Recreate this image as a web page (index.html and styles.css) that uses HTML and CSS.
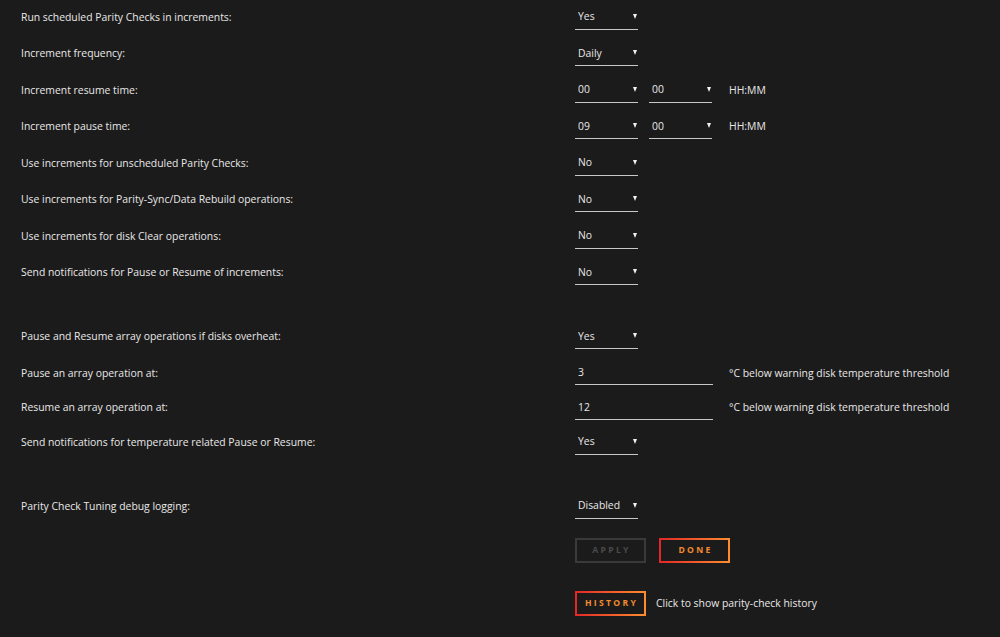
FILE: index.html
```html
<!DOCTYPE html>
<html lang="en">
<head>
    <meta charset="UTF-8">
    <title>Parity Check Tuning</title>
    <link rel="stylesheet" href="styles.css">
</head>
<body>
    <form class="settings">
        <div class="row">
            <span class="label">Run scheduled Parity Checks in increments:</span>
            <div class="control"><span class="select"><select><option>Yes</option></select></span></div>
        </div>
        <div class="row">
            <span class="label">Increment frequency:</span>
            <div class="control"><span class="select"><select><option>Daily</option></select></span></div>
        </div>
        <div class="row">
            <span class="label">Increment resume time:</span>
            <div class="control">
                <span class="select"><select><option>00</option></select></span>
                <span class="select"><select><option>00</option></select></span>
                <span class="hint">HH:MM</span>
            </div>
        </div>
        <div class="row">
            <span class="label">Increment pause time:</span>
            <div class="control">
                <span class="select"><select><option>09</option></select></span>
                <span class="select"><select><option>00</option></select></span>
                <span class="hint">HH:MM</span>
            </div>
        </div>
        <div class="row">
            <span class="label">Use increments for unscheduled Parity Checks:</span>
            <div class="control"><span class="select"><select><option>No</option></select></span></div>
        </div>
        <div class="row">
            <span class="label">Use increments for Parity-Sync/Data Rebuild operations:</span>
            <div class="control"><span class="select"><select><option>No</option></select></span></div>
        </div>
        <div class="row">
            <span class="label">Use increments for disk Clear operations:</span>
            <div class="control"><span class="select"><select><option>No</option></select></span></div>
        </div>
        <div class="row">
            <span class="label">Send notifications for Pause or Resume of increments:</span>
            <div class="control"><span class="select"><select><option>No</option></select></span></div>
        </div>

        <div class="spacer"></div>

        <div class="row">
            <span class="label">Pause and Resume array operations if disks overheat:</span>
            <div class="control"><span class="select"><select><option>Yes</option></select></span></div>
        </div>
        <div class="row row-input">
            <span class="label">Pause an array operation at:</span>
            <div class="control">
                <input type="text" class="text" value="3">
                <span class="hint">°C below warning disk temperature threshold</span>
            </div>
        </div>
        <div class="row row-input">
            <span class="label">Resume an array operation at:</span>
            <div class="control">
                <input type="text" class="text" value="12">
                <span class="hint">°C below warning disk temperature threshold</span>
            </div>
        </div>
        <div class="row">
            <span class="label">Send notifications for temperature related Pause or Resume:</span>
            <div class="control"><span class="select"><select><option>Yes</option></select></span></div>
        </div>

        <div class="spacer"></div>

        <div class="row">
            <span class="label">Parity Check Tuning debug logging:</span>
            <div class="control"><span class="select"><select><option>Disabled</option></select></span></div>
        </div>

        <div class="buttons">
            <button type="button" class="btn" disabled>Apply</button>
            <button type="button" class="btn">Done</button>
        </div>

        <div class="buttons history">
            <button type="button" class="btn">History</button>
            <span class="hint">Click to show parity-check history</span>
        </div>
    </form>
</body>
</html>
```

FILE: styles.css
```css
/* Parity check tuning settings - dark theme */
body {
    margin: 0;
    background: #1c1b1b;
    color: #e8e8e8;
    font-family: 'Open Sans', 'DejaVu Sans', sans-serif;
    font-size: 10.4px;
}

.settings {
    padding: 3.5px 0 0 21px;
}

.row {
    display: grid;
    grid-template-columns: 554px auto;
    align-items: center;
    height: 26px;
    margin-bottom: 10.5px;
}

.row-input {
    margin-bottom: 8.5px;
}

.control {
    display: flex;
    align-items: center;
    gap: 11px;
}

.select {
    position: relative;
    display: inline-block;
    width: 63px;
}

.select::after {
    content: "";
    position: absolute;
    right: 1px;
    top: 10px;
    border-left: 2.5px solid transparent;
    border-right: 2.5px solid transparent;
    border-top: 5px solid #f2f2f2;
    pointer-events: none;
}

select {
    -webkit-appearance: none;
    appearance: none;
    width: 100%;
    height: 26px;
    padding: 0 0 0 3px;
    background: transparent;
    color: #e8e8e8;
    border: none;
    border-bottom: 1px solid #c8c8c8;
    border-radius: 0;
    font-family: inherit;
    font-size: 10.4px;
    outline: none;
}

.text {
    width: 138px;
    height: 25px;
    box-sizing: border-box;
    padding: 0 0 0 3px;
    margin-right: 5px;
    background: transparent;
    color: #e8e8e8;
    border: none;
    border-bottom: 1px solid #c8c8c8;
    font-family: inherit;
    font-size: 10.4px;
    outline: none;
}

.hint {
    margin-left: 6px;
}

.row-input .hint {
    margin-left: 0;
}

.spacer {
    height: 27.5px;
}

.buttons {
    display: flex;
    align-items: center;
    gap: 13px;
    margin-left: 554px;
    margin-top: 19px;
}

.history {
    margin-top: 28px;
    gap: 10px;
}

.history .hint {
    margin-left: 0;
}

.btn {
    width: 71px;
    height: 25px;
    padding: 0 0 0 2px;
    background: transparent;
    border: 2px solid;
    border-image: linear-gradient(90deg, #e22828, #ff8c2f) 1;
    color: #f28a30;
    font-family: inherit;
    font-size: 8.6px;
    font-weight: bold;
    letter-spacing: 2.3px;
    text-transform: uppercase;
    cursor: pointer;
}

.btn:disabled {
    border-image: none;
    border-color: #3a3a3a;
    color: #4a4a4a;
    cursor: default;
}
```
